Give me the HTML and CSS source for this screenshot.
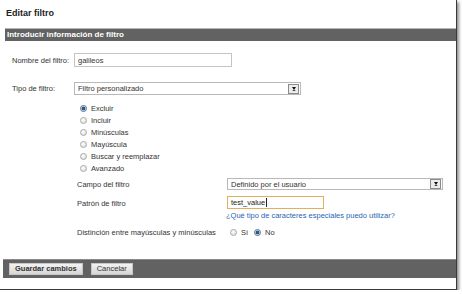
FILE: index.html
```html
<!DOCTYPE html>
<html lang="es">
<head>
    <meta charset="UTF-8">
    <title>Editar filtro</title>
    <link rel="stylesheet" href="styles.css">
</head>
<body>
    <div class="frame">
        <h1 class="title">Editar filtro</h1>

        <div class="panel-head">Introducir información de filtro</div>

        <div class="panel-body">
            <div class="row">
                <span class="row-label">Nombre del filtro:</span>
                <div class="field field-name">galileos</div>
            </div>
            <div class="row row-type">
                <span class="row-label">Tipo de filtro:</span>
                <div class="select select-type">
                    <span class="select-text">Filtro personalizado</span>
                    <span class="select-btn"></span>
                </div>
            </div>

            <ul class="radio-list">
                <li><span class="radio checked"></span>Excluir</li>
                <li><span class="radio"></span>Incluir</li>
                <li><span class="radio"></span>Minúsculas</li>
                <li><span class="radio"></span>Mayúscula</li>
                <li><span class="radio"></span>Buscar y reemplazar</li>
                <li><span class="radio"></span>Avanzado</li>
            </ul>

            <div class="sub-form">
                <div class="sub-row">
                    <span class="sub-label">Campo del filtro</span>
                    <div class="select select-field">
                        <span class="select-text">Definido por el usuario</span>
                        <span class="select-btn"></span>
                    </div>
                </div>
                <div class="sub-row sub-row-top">
                    <span class="sub-label pattern-label">Patrón de filtro</span>
                    <div class="sub-ctrl">
                        <div class="field field-pattern">test_value<span class="caret"></span></div>
                        <a class="help-link" href="#">¿Qué tipo de caracteres especiales puedo utilizar?</a>
                    </div>
                </div>
                <div class="sub-row sub-row-case">
                    <span class="sub-label">Distinción entre mayúsculas y minúsculas</span>
                    <div class="choice">
                        <span class="radio"></span><span class="choice-text">Sí</span>
                        <span class="radio checked"></span><span class="choice-text">No</span>
                    </div>
                </div>
            </div>
        </div>

        <div class="panel-foot">
            <button class="btn btn-save">Guardar cambios</button>
            <button class="btn">Cancelar</button>
        </div>
    </div>
</body>
</html>
```

FILE: styles.css
```css
body {
    margin: 0;
    background: #fff;
    font-family: "Liberation Sans", Arial, sans-serif;
    color: #333;
}

.frame {
    width: 456px;
    height: 289px;
    background: #fff;
    border-right: 1px solid #3a3a3a;
    border-bottom: 1px solid #3a3a3a;
    box-shadow: 2px 2px 3px rgba(0, 0, 0, 0.45);
    overflow: hidden;
}

.title {
    margin: 0;
    padding: 7px 0 0 6px;
    font-size: 9px;
    line-height: 12px;
    font-weight: bold;
    color: #222;
}

.panel-head {
    margin: 9px 0 0 5px;
    height: 12px;
    border-top: 1px solid #b5b5b5;
    background: #626262;
    color: #fff;
    font-size: 8px;
    font-weight: bold;
    line-height: 12px;
    padding-left: 2px;
}

.panel-body {
    padding: 12px 0 0 12px;
    font-size: 7.5px;
}

.row {
    display: flex;
    align-items: center;
}
.row-label {
    width: 62px;
}
.row-type {
    margin-top: 15px;
}

.field {
    box-sizing: border-box;
    border: 1px solid #c4c4c4;
    background: #fff;
    padding-left: 3px;
    display: flex;
    align-items: center;
}
.field-name {
    width: 158px;
    height: 14px;
}
.field-pattern {
    width: 97px;
    height: 13px;
    border-color: #e0b060;
    color: #222;
}
.caret {
    width: 1px;
    height: 9px;
    background: #222;
    margin-left: 1px;
}

.select {
    box-sizing: border-box;
    display: flex;
    align-items: center;
    border: 1px solid #b8b8b8;
    background: #fff;
    padding: 0 1px 0 3px;
}
.select-text {
    flex: 1;
}
.select-type {
    width: 227px;
    height: 13px;
}
.select-field {
    width: 216px;
    height: 12px;
}
.select-btn {
    box-sizing: border-box;
    width: 11px;
    height: 10px;
    border: 1px solid #8a8a8a;
    background: #ececec;
    display: flex;
    align-items: center;
    justify-content: center;
}
.select-btn::after {
    content: "";
    border-left: 2.5px solid transparent;
    border-right: 2.5px solid transparent;
    border-top: 3px solid #111;
    border-bottom: 1px solid #111;
    height: 0;
}

.radio-list {
    list-style: none;
    margin: 7px 0 0 68px;
    padding: 0;
}
.radio-list li {
    display: flex;
    align-items: center;
    height: 12px;
}

.radio {
    box-sizing: border-box;
    width: 7px;
    height: 7px;
    border-radius: 50%;
    border: 1px solid #a9a9a9;
    background: radial-gradient(circle at 40% 35%, #fff, #d6d6d6);
    margin-right: 4px;
    flex-shrink: 0;
}
.radio.checked {
    border-color: #5a6f86;
    background: radial-gradient(circle, #1f5b99 0 1.6px, #e4e4e4 2.2px);
}

.sub-form {
    margin: 4px 0 0 65px;
}
.sub-row {
    display: flex;
    align-items: center;
}
.sub-row-top {
    align-items: flex-start;
    margin-top: 6px;
}
.sub-row-case {
    margin-top: 7px;
}
.sub-label {
    width: 150px;
}
.pattern-label {
    padding-top: 3px;
}
.sub-ctrl {
    display: flex;
    flex-direction: column;
}
.help-link {
    margin: 2px 0 0 -1px;
    color: #2a66b0;
    text-decoration: none;
    line-height: 10px;
}

.choice {
    display: flex;
    align-items: center;
    margin-left: 3px;
}
.choice-text {
    margin-right: 6px;
}

.panel-foot {
    margin: 22px 0 0 3px;
    height: 18px;
    background: #626262;
    border-top: 1px solid #8a8a8a;
    display: flex;
    align-items: center;
    gap: 8px;
    padding-left: 6px;
}
.btn {
    font-family: inherit;
    font-size: 7.5px;
    color: #333;
    background: linear-gradient(#f2f2f2, #d6d6d6);
    border: 1px solid #c8c8c8;
    height: 12px;
    padding: 0 5px;
    line-height: 10px;
}
.btn-save {
    font-weight: bold;
}
```
